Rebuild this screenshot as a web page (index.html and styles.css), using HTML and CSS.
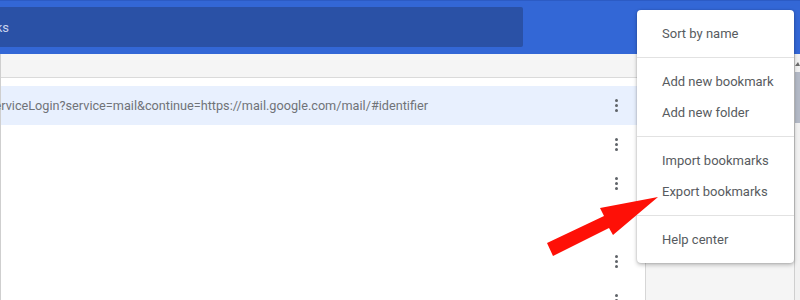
FILE: index.html
```html
<!DOCTYPE html>
<html lang="en">
<head>
    <meta charset="UTF-8">
    <title>Bookmarks</title>
    <link rel="stylesheet" href="styles.css">
</head>
<body>
<div class="page">
    <div class="topbar">
        <div class="search">
            <div class="search-text"><span>Search bookmarks</span></div>
        </div>
    </div>
    <div class="main">
        <div class="content">
            <div class="toolbar"></div>
            <div class="lower">
                <div class="card">
                    <div class="row selected">
                        <div class="url"><span>https://accounts.google.com/ServiceLogin?service=mail&amp;continue=https://mail.google.com/mail/#identifier</span></div>
                        <div class="kebab"><i></i><i></i><i></i></div>
                    </div>
                    <div class="row"><div class="url"></div><div class="kebab"><i></i><i></i><i></i></div></div>
                    <div class="row"><div class="url"></div><div class="kebab"><i></i><i></i><i></i></div></div>
                    <div class="row"><div class="url"></div><div class="kebab"><i></i><i></i><i></i></div></div>
                    <div class="row"><div class="url"></div><div class="kebab"><i></i><i></i><i></i></div></div>
                    <div class="row"><div class="url"></div><div class="kebab"><i></i><i></i><i></i></div></div>
                </div>
                <div class="side"></div>
            </div>
        </div>
        <div class="scrollbar">
            <div class="scroll-up"></div>
            <div class="thumb"></div>
        </div>
    </div>

    <!-- overflow menu -->
    <div class="menu">
        <div class="menu-group">
            <div class="menu-item">Sort by name</div>
        </div>
        <div class="menu-group">
            <div class="menu-item">Add new bookmark</div>
            <div class="menu-item">Add new folder</div>
        </div>
        <div class="menu-group">
            <div class="menu-item">Import bookmarks</div>
            <div class="menu-item">Export bookmarks</div>
        </div>
        <div class="menu-group">
            <div class="menu-item">Help center</div>
        </div>
    </div>

    <svg class="arrow" width="800" height="300" viewBox="0 0 800 300">
        <polygon points="547,243 604,216 600,208 658,197 613,235 609,228 553,256" fill="#fe1007"/>
    </svg>
</div>
</body>
</html>
```

FILE: styles.css
```css
* {
    margin: 0;
    padding: 0;
    box-sizing: border-box;
}

body {
    font-family: Roboto, "Liberation Sans", sans-serif;
    font-size: 13px;
    background: #fff;
}

.page {
    width: 800px;
    height: 300px;
    position: relative;
    overflow: hidden;
    display: flex;
    flex-direction: column;
}

/* blue header */
.topbar {
    height: 54px;
    background: #3367d6;
    border-top: 1px solid #2c5bc4;
    padding-top: 6px;
    flex-shrink: 0;
}

.search {
    width: 523px;
    height: 40px;
    background: #2a51a6;
    border-radius: 0 2px 2px 0;
    display: flex;
    align-items: center;
}

.search-text {
    width: 9px;
    display: flex;
    justify-content: flex-end;
    white-space: nowrap;
    color: #c9d4ee;
    font-size: 13px;
}

.main {
    flex: 1;
    display: flex;
    border-bottom: 1px solid #cfcfcf;
}

.content {
    flex: 1;
    display: flex;
    flex-direction: column;
    background: #f5f5f5;
    border-left: 1px solid #cfcfcf;
}

.toolbar {
    height: 24px;
    border-bottom: 1px solid #dadada;
    flex-shrink: 0;
}

.lower {
    flex: 1;
    display: flex;
}

.card {
    width: 645px;
    background: #fff;
    border-right: 1px solid #d6d6d6;
    padding-top: 8px;
}

.side {
    flex: 1;
}

.row {
    height: 39px;
    display: flex;
    align-items: center;
}

.row.selected {
    background: #e8f0fe;
}

.url {
    width: 427px;
    display: flex;
    justify-content: flex-end;
    white-space: nowrap;
    color: #707378;
    font-size: 12.7px;
}

.kebab {
    margin-left: 187px;
    width: 3px;
    display: flex;
    flex-direction: column;
    gap: 2px;
}

.kebab i {
    display: block;
    width: 3px;
    height: 3px;
    border-radius: 50%;
    background: #5f6368;
}

.scrollbar {
    width: 6px;
    background: #f1f1f1;
    border-left: 1px solid #cfcfcf;
    padding-top: 8px;
}

.scroll-up {
    width: 0;
    height: 0;
    border-left: 3px solid transparent;
    border-right: 2px solid transparent;
    border-bottom: 4px solid #6b6b6b;
}

.thumb {
    margin-top: 6px;
    height: 51px;
    background: #b3b9c6;
}

/* dropdown */
.menu {
    position: absolute;
    left: 637px;
    top: 10px;
    width: 157px;
    background: #fff;
    border-radius: 4px;
    box-shadow: 0 2px 4px rgba(0, 0, 0, .25), 0 0 2px rgba(0, 0, 0, .2);
}

.menu-group {
    padding: 8px 0;
    border-top: 1px solid #e2e2e2;
}

.menu-group:first-child {
    border-top: 0;
}

.menu-item {
    height: 31px;
    line-height: 31px;
    padding-left: 25px;
    color: #575b60;
    white-space: nowrap;
}

.arrow {
    position: absolute;
    left: 0;
    top: 0;
}
```
